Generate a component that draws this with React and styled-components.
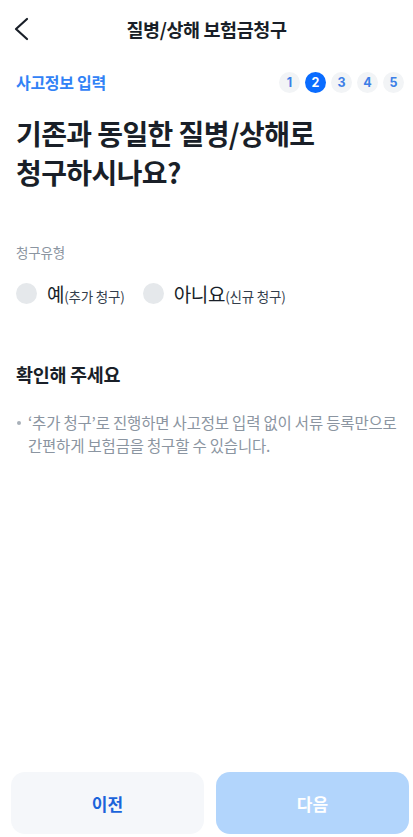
import React from "react";
import styled, { createGlobalStyle } from "styled-components";

const GlobalStyle = createGlobalStyle`
  * { box-sizing: border-box; }
  html, body { margin: 0; padding: 0; background: #ffffff; }
  body {
    font-family: "Noto Sans CJK KR", "Noto Sans", sans-serif;
    color: #191f28;
    -webkit-font-smoothing: antialiased;
  }
`;

const Page = styled.div`
  display: flex;
  flex-direction: column;
  height: 100vh;
  min-height: 837px;
`;

const Header = styled.header`
  display: grid;
  grid-template-columns: 52px 1fr 52px;
  align-items: center;
  height: 58px;
`;

const BackButton = styled.button`
  display: flex;
  align-items: center;
  justify-self: start;
  padding: 0 0 0 13px;
  border: none;
  background: none;
  height: 40px;
  cursor: pointer;
`;

const Title = styled.h1`
  margin: 0;
  text-align: center;
  font-size: 18.5px;
  font-weight: 600;
  letter-spacing: -0.4px;
  color: #191f28;
`;

const Content = styled.main`
  flex: 1;
  display: flex;
  flex-direction: column;
  padding: 0 16px;
`;

const StepRow = styled.div`
  display: flex;
  align-items: center;
  justify-content: space-between;
  margin-top: 13px;
  margin-right: -7px;
  height: 22px;
`;

const StepName = styled.span`
  font-size: 16px;
  font-weight: 700;
  color: #3182f6;
  letter-spacing: -0.3px;
`;

const Steps = styled.ol`
  display: flex;
  gap: 5px;
  margin: 0;
  padding: 0;
  list-style: none;
`;

const Step = styled.li`
  width: 21px;
  height: 21px;
  border-radius: 50%;
  display: flex;
  align-items: center;
  justify-content: center;
  font-family: "Inter", "Noto Sans", sans-serif;
  font-size: 12.5px;
  font-weight: 700;
  background: ${p => (p.$active ? "#0a6cff" : "#f2f4f6")};
  color: ${p => (p.$active ? "#ffffff" : "#3d7fe6")};
`;

const Question = styled.h2`
  margin: 21px 0 0;
  font-size: 28px;
  line-height: 39px;
  font-weight: 700;
  letter-spacing: -0.6px;
  color: #191f28;
`;

const FieldLabel = styled.div`
  margin-top: 50px;
  font-size: 13.5px;
  line-height: 20px;
  color: #8b95a1;
  letter-spacing: -0.2px;
`;

const RadioGroup = styled.div`
  display: flex;
  align-items: center;
  gap: 18px;
  margin-top: 20px;
  height: 23px;
`;

const RadioOption = styled.label`
  display: flex;
  align-items: center;
  gap: 10px;
  cursor: pointer;
`;

const RadioDot = styled.span`
  width: 21px;
  height: 21px;
  border-radius: 50%;
  background: ${p => (p.$checked ? "#3182f6" : "#e5e8eb")};
`;

const RadioText = styled.span`
  font-size: 19px;
  color: #191f28;
  letter-spacing: -0.3px;
`;

const RadioHint = styled.small`
  font-size: 13.5px;
  color: #333d4b;
  letter-spacing: -0.2px;
`;

const NoticeTitle = styled.h3`
  margin: 57px 0 0;
  font-size: 18.5px;
  line-height: 24px;
  font-weight: 700;
  letter-spacing: -0.3px;
  color: #191f28;
`;

const NoticeList = styled.ul`
  margin: 25px 0 0;
  padding: 0;
  list-style: none;
`;

const NoticeItem = styled.li`
  position: relative;
  padding-left: 12px;
  font-size: 15.5px;
  line-height: 23px;
  color: #8b95a1;
  letter-spacing: -0.2px;
  word-break: keep-all;

  &::before {
    content: "";
    position: absolute;
    left: 1px;
    top: 10px;
    width: 4px;
    height: 4px;
    border-radius: 50%;
    background: #a8b0b9;
  }
`;

const Footer = styled.footer`
  display: grid;
  grid-template-columns: 1fr 1fr;
  gap: 12px;
  padding: 0 4px 3px 11px;
`;

const ActionButton = styled.button`
  height: 62px;
  border: none;
  border-radius: 14px;
  font-family: inherit;
  font-size: 17px;
  font-weight: 700;
  background: ${p => (p.$primary ? "#b2d5fc" : "#f5f7fa")};
  color: ${p => (p.$primary ? "#ffffff" : "#1b64da")};
`;

const ChevronLeft = () => (
  <svg width="16" height="24" viewBox="0 0 16 24" fill="none">
    <path d="M14 2 L3 12 L14 22" stroke="#191f28" strokeWidth="2.2" strokeLinecap="round" strokeLinejoin="round" />
  </svg>
);

export default function App() {
  return (
    <>
      <GlobalStyle />
      <Page>
        <Header>
          <BackButton aria-label="뒤로">
            <ChevronLeft />
          </BackButton>
          <Title>질병/상해 보험금청구</Title>
          <span />
        </Header>
        <Content>
          <StepRow>
            <StepName>사고정보 입력</StepName>
            <Steps>
              {[1, 2, 3, 4, 5].map(n => (
                <Step key={n} $active={n === 2}>{n}</Step>
              ))}
            </Steps>
          </StepRow>
          <Question>
            기존과 동일한 질병/상해로
            <br />
            청구하시나요?
          </Question>
          <FieldLabel>청구유형</FieldLabel>
          <RadioGroup>
            <RadioOption>
              <RadioDot />
              <RadioText>
                예<RadioHint>(추가 청구)</RadioHint>
              </RadioText>
            </RadioOption>
            <RadioOption>
              <RadioDot />
              <RadioText>
                아니요<RadioHint>(신규 청구)</RadioHint>
              </RadioText>
            </RadioOption>
          </RadioGroup>
          <NoticeTitle>확인해 주세요</NoticeTitle>
          <NoticeList>
            <NoticeItem>
              ‘추가 청구’로 진행하면 사고정보 입력 없이 서류 등록만으로 간편하게 보험금을 청구할 수 있습니다.
            </NoticeItem>
          </NoticeList>
        </Content>
        <Footer>
          <ActionButton>이전</ActionButton>
          <ActionButton $primary>다음</ActionButton>
        </Footer>
      </Page>
    </>
  );
}
